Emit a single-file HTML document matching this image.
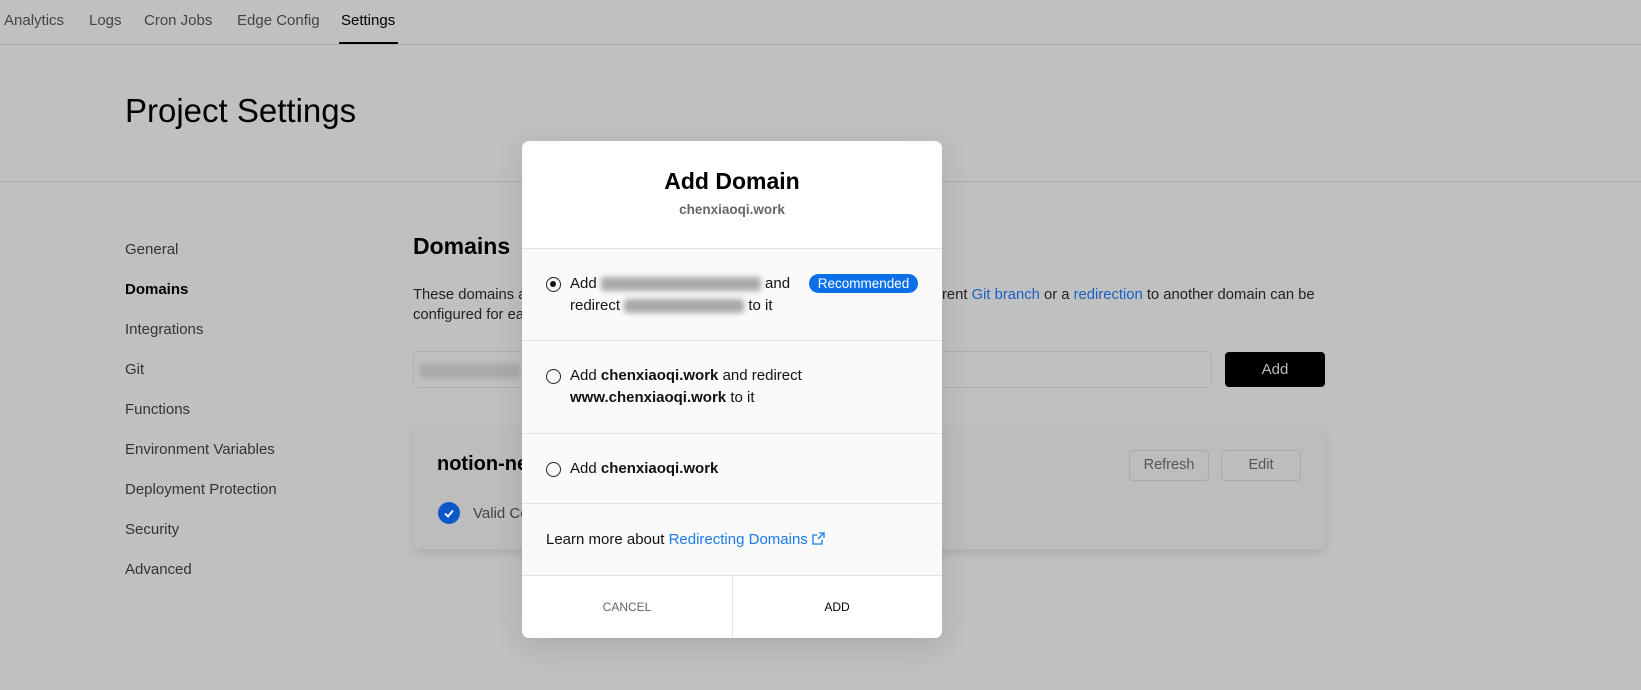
<!DOCTYPE html>
<html><head><meta charset="utf-8"><style>
*{box-sizing:border-box;margin:0;padding:0}
body{width:1641px;height:690px;background:#c0c0c0;font-family:"Liberation Sans",sans-serif;position:relative;overflow:hidden;color:#000}
.a{position:absolute;white-space:nowrap}
.tab{font-size:15px;color:#444;top:12px}
.side{font-size:15px;color:#333;left:125px}
.blur{display:inline-block;background:#a8a8a8;filter:blur(3px);height:14px;vertical-align:middle;border-radius:3px}
.m{position:absolute;left:522px;top:141px;width:420px;height:497px;background:#fff;border-radius:7px;overflow:hidden;box-shadow:0 8px 30px rgba(0,0,0,.12)}
.sec{position:absolute;left:0;width:420px;background:#fafafa;border-top:1px solid #e5e5e5}
.t{font-size:15px;color:#111;line-height:22px;position:absolute;left:48px}
.r{position:absolute;left:24px;width:15px;height:15px;border:1.5px solid #222;border-radius:50%}
</style></head><body>
<div class="a tab" style="left:4px">Analytics</div>
<div class="a tab" style="left:89px">Logs</div>
<div class="a tab" style="left:144px">Cron Jobs</div>
<div class="a tab" style="left:237px">Edge Config</div>
<div class="a tab" style="left:341px;color:#000">Settings</div>
<div class="a" style="left:339px;top:42px;width:59px;height:2px;background:#000"></div>
<div class="a" style="left:0;top:44px;width:1641px;height:1px;background:#adadad"></div>
<div class="a" style="left:125px;top:92px;font-size:33px;color:#000">Project Settings</div>
<div class="a" style="left:0;top:181px;width:1641px;height:1px;background:#adadad"></div>
<div class="a side" style="top:241px">General</div>
<div class="a side" style="top:281px;color:#000;font-weight:bold">Domains</div>
<div class="a side" style="top:321px">Integrations</div>
<div class="a side" style="top:361px">Git</div>
<div class="a side" style="top:401px">Functions</div>
<div class="a side" style="top:441px">Environment Variables</div>
<div class="a side" style="top:481px">Deployment Protection</div>
<div class="a side" style="top:521px">Security</div>
<div class="a side" style="top:561px">Advanced</div>
<div class="a" style="left:413px;top:233px;font-size:23px;font-weight:bold">Domains</div>
<div class="a" style="left:413px;top:287px;font-size:14.8px;color:#222">These domains a</div>
<div class="a" style="left:413px;top:307px;font-size:14.8px;color:#222">configured for ea</div>
<div class="a" style="left:942px;top:287px;font-size:14.8px;color:#222">rent <span style="color:#1a5fc4">Git branch</span> or a <span style="color:#1a5fc4">redirection</span> to another domain can be</div>
<div class="a" style="left:413px;top:351px;width:799px;height:37px;border:1px solid #b0b0b0;border-radius:5px"></div>
<div class="a" style="left:420px;top:362px"><span class="blur" style="width:100px"></span></div>
<div class="a" style="left:1225px;top:352px;width:100px;height:35px;background:#000;border-radius:4px;color:#bbb;font-size:15px;text-align:center;line-height:35px">Add</div>
<div class="a" style="left:413px;top:427px;width:912px;height:122px;background:#bdbdbd;border-radius:5px;box-shadow:0 4px 10px rgba(0,0,0,.1)"></div>
<div class="a" style="left:437px;top:453px;font-size:20px;font-weight:bold">notion-ne</div>
<div class="a" style="left:1129px;top:450px;width:80px;height:31px;border:1px solid #aaa;border-radius:4px;color:#555;font-size:14.5px;text-align:center;line-height:29px">Refresh</div>
<div class="a" style="left:1221px;top:450px;width:80px;height:31px;border:1px solid #aaa;border-radius:4px;color:#555;font-size:14.5px;text-align:center;line-height:29px">Edit</div>
<div class="a" style="left:438px;top:502px;width:22px;height:22px;border-radius:50%;background:#0b58c8"><svg width="22" height="22"><path d="M7 11.5l3 3 5-6" stroke="#fff" stroke-width="1.8" fill="none"/></svg></div>
<div class="a" style="left:473px;top:505px;font-size:15px;color:#444">Valid Co</div>

<div class="m">
 <div class="a" style="left:0;width:420px;top:27px;text-align:center;font-size:23px;font-weight:bold">Add Domain</div>
 <div class="a" style="left:0;width:420px;top:61px;text-align:center;font-size:13.5px;font-weight:bold;color:#666">chenxiaoqi.work</div>
 <div class="sec" style="top:107px;height:92px">
  <div class="r" style="top:28px"><div style="position:absolute;left:3px;top:3px;width:6px;height:6px;border-radius:50%;background:#111"></div></div>
  <div class="t" style="top:24px">Add <span class="blur" style="width:160px"></span> and<br>redirect <span class="blur" style="width:120px"></span> to it</div>
  <div class="a" style="left:287px;top:25px;width:109px;height:19px;border-radius:10px;background:#0a6fe8;color:#fff;font-size:13.5px;text-align:center;line-height:19px">Recommended</div>
 </div>
 <div class="sec" style="top:199px;height:93px">
  <div class="r" style="top:28px"></div>
  <div class="t" style="top:24px">Add <b>chenxiaoqi.work</b> and redirect<br><b>www.chenxiaoqi.work</b> to it</div>
 </div>
 <div class="sec" style="top:292px;height:70px">
  <div class="r" style="top:28px"></div>
  <div class="t" style="top:24px">Add <b>chenxiaoqi.work</b></div>
 </div>
 <div class="sec" style="top:362px;height:72px">
  <div class="t" style="top:25px;left:24px">Learn more about <span style="color:#1a7ae6">Redirecting Domains</span> <svg width="13" height="13" viewBox="0 0 13 13" style="vertical-align:-1px"><path d="M7 1h5v5M12 1L6 7M10 8v4H1V3h4" stroke="#1a7ae6" stroke-width="1.3" fill="none"/></svg></div>
 </div>
 <div class="a" style="left:0;top:434px;width:420px;height:1px;background:#e5e5e5"></div>
 <div class="a" style="left:210px;top:434px;width:1px;height:63px;background:#e5e5e5"></div>
 <div class="a" style="left:0;width:210px;top:459px;text-align:center;font-size:12px;color:#666">CANCEL</div>
 <div class="a" style="left:210px;width:210px;top:459px;text-align:center;font-size:12px;color:#000">ADD</div>
</div>
</body></html>
